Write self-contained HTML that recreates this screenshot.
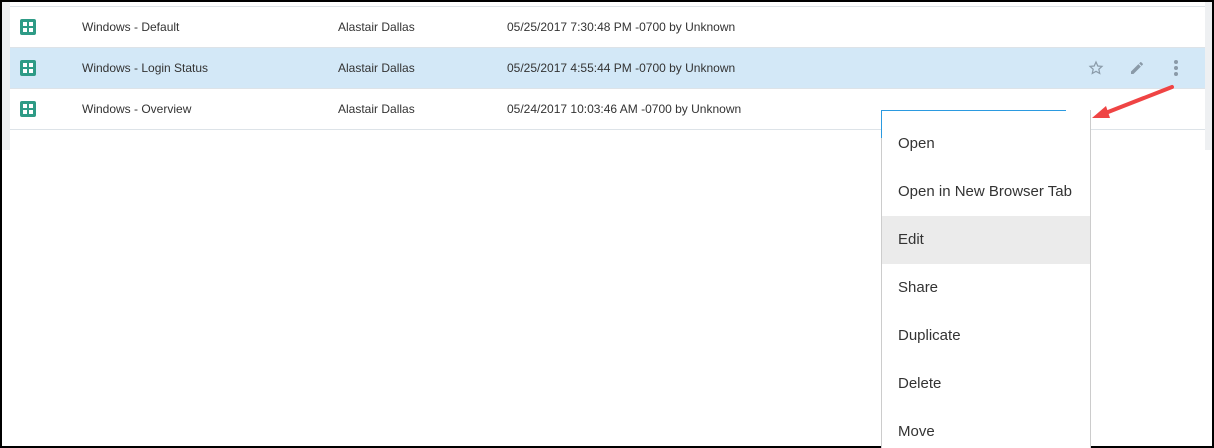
<!DOCTYPE html>
<html style="overflow:hidden;width:1214px;height:448px"><head><style>
body{margin:0;width:1214px;height:448px;overflow:hidden;background:#fff;font-family:"Liberation Sans",sans-serif;position:relative}
.abs{position:absolute}
.row{position:absolute;left:10px;width:1195px;height:40px;border-bottom:1px solid #dde3e8;font-size:12px;color:#333}
.row span{position:absolute;top:13px}
.ic{position:absolute;left:10px;top:12px;width:16px;height:16px;background:#2e9b86;border-radius:2px}
.ic i{position:absolute;width:4px;height:4px;background:#fff}
.menu{position:absolute;left:881px;top:110px;width:208px;height:338px;overflow:hidden;background:#fff;border-left:1px solid #ccc;border-right:1px solid #ccc}
.item{height:48px;line-height:48px;padding-left:16px;font-size:15px;color:#333}
</style></head><body>
<div class="abs" style="left:0;top:0;width:1214px;height:2px;background:#000"></div>
<div class="abs" style="left:0;top:0;width:2px;height:448px;background:#000"></div>
<div class="abs" style="left:1212px;top:0;width:2px;height:448px;background:#000"></div>
<div class="abs" style="left:0;top:446px;width:1214px;height:2px;background:#000"></div>
<div class="abs" style="left:2px;top:2px;width:8px;height:148px;background:#eef0f2"></div>
<div class="abs" style="left:1205px;top:2px;width:7px;height:148px;background:#eef0f2"></div>
<div class="abs" style="left:10px;top:6px;width:1195px;height:1px;background:#dde3e8"></div>

<div class="row" style="top:7px"><div class="ic"><i style="left:3px;top:3px"></i><i style="left:9px;top:3px"></i><i style="left:3px;top:9px"></i><i style="left:9px;top:9px"></i></div>
<span style="left:72px">Windows - Default</span><span style="left:328px">Alastair Dallas</span><span style="left:497px">05/25/2017 7:30:48 PM -0700 by Unknown</span></div>
<div class="row" style="top:48px;background:#d3e8f7"><div class="ic"><i style="left:3px;top:3px"></i><i style="left:9px;top:3px"></i><i style="left:3px;top:9px"></i><i style="left:9px;top:9px"></i></div>
<span style="left:72px">Windows - Login Status</span><span style="left:328px">Alastair Dallas</span><span style="left:497px">05/25/2017 4:55:44 PM -0700 by Unknown</span>
<svg class="abs" style="left:1078px;top:12px" width="16" height="16" viewBox="0 0 24 24"><path d="M12 3l2.7 6 6.3.6-4.8 4.3 1.4 6.3L12 17l-5.6 3.2 1.4-6.3L3 9.6 9.3 9z" fill="none" stroke="#8a9aa8" stroke-width="1.8"/></svg>
<svg class="abs" style="left:1119px;top:12px" width="16" height="16" viewBox="0 0 24 24"><path d="M3 17.3V21h3.7L17.8 9.9l-3.7-3.7zM20.7 7c.4-.4.4-1 0-1.4l-2.3-2.3c-.4-.4-1-.4-1.4 0l-1.8 1.8 3.7 3.7z" fill="#8a9aa8"/></svg>
<svg class="abs" style="left:1160px;top:11px" width="12" height="18"><circle cx="6" cy="3" r="2" fill="#8a9aa8"/><circle cx="6" cy="9" r="2" fill="#8a9aa8"/><circle cx="6" cy="15" r="2" fill="#8a9aa8"/></svg></div>
<div class="row" style="top:89px"><div class="ic"><i style="left:3px;top:3px"></i><i style="left:9px;top:3px"></i><i style="left:3px;top:9px"></i><i style="left:9px;top:9px"></i></div>
<span style="left:72px">Windows - Overview</span><span style="left:328px">Alastair Dallas</span><span style="left:497px">05/24/2017 10:03:46 AM -0700 by Unknown</span></div>

<div class="menu"><div style="height:10px"></div>
<div class="item">Open</div><div class="item">Open in New Browser Tab</div><div class="item" style="background:#ebebeb">Edit</div><div class="item">Share</div><div class="item">Duplicate</div><div class="item">Delete</div><div class="item">Move</div></div>
<div class="abs" style="left:881px;top:110px;width:185px;height:1px;background:#2b9ae0"></div>
<div class="abs" style="left:881px;top:110px;width:1px;height:28px;background:#2b9ae0"></div>
<svg class="abs" style="left:1085px;top:80px" width="100" height="50"><g stroke="#ef4444" stroke-width="4" stroke-linecap="round" fill="#ef4444"><line x1="87" y1="7" x2="18" y2="34"/></g><path d="M7 38l14-12 4 12z" fill="#ef4444"/></svg>
</body></html>
